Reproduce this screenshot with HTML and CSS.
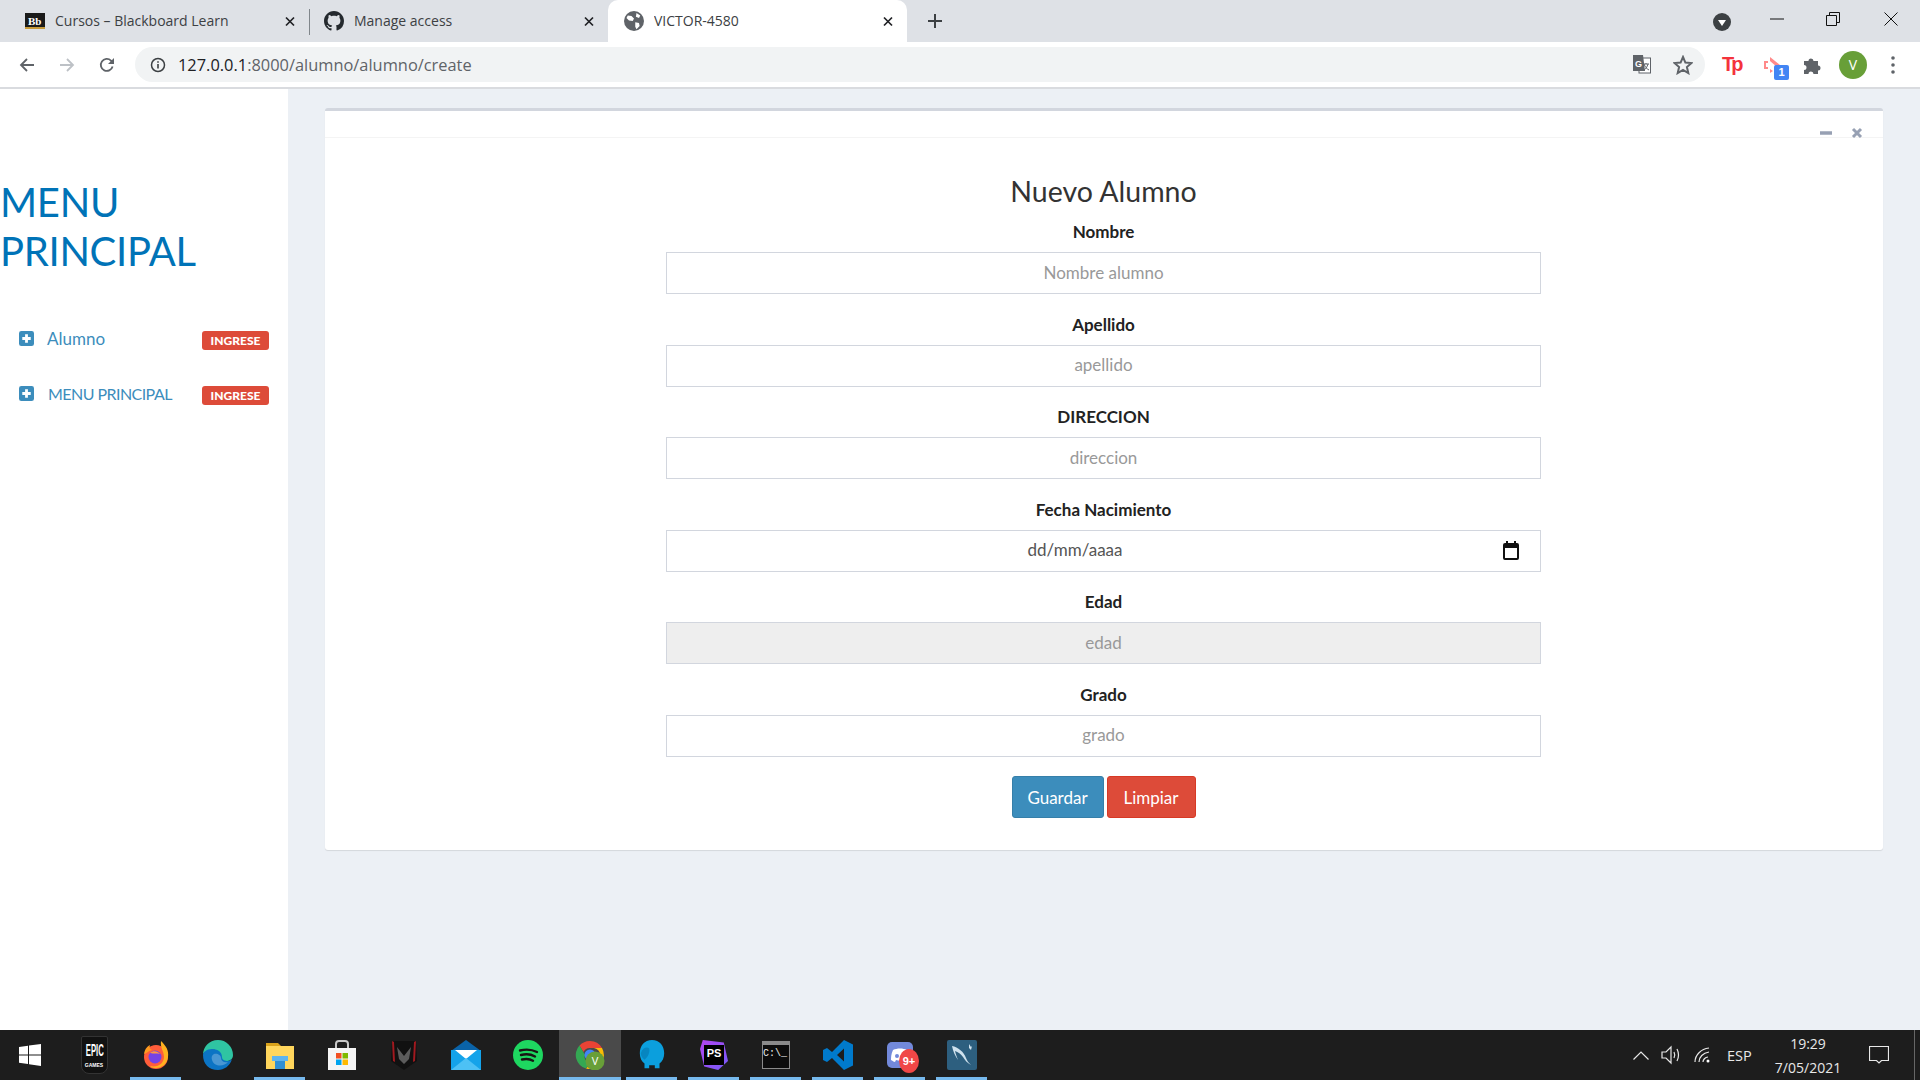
FILE: index.html
```html
<!DOCTYPE html>
<html lang="en">
<head>
  <meta charset="UTF-8">
  <title>VICTOR-4580</title>
  <link rel="stylesheet" href="styles.css">
</head>
<body>
  <div class="tabstrip">
    <div class="tab">
      <svg class="favicon" viewBox="0 0 20 16"><rect width="20" height="16" fill="#1a1a1a"/><rect x="0" y="14" width="20" height="2" fill="#c79a3a"/><text x="3" y="12" class="bb-mark">Bb</text></svg>
      <span class="tab-title">Cursos – Blackboard Learn</span>
      <svg class="tab-close" viewBox="0 0 10 10"><path d="M1 1l8 8M9 1l-8 8"/></svg>
    </div>
    <div class="tab tab-sep">
      <svg class="favicon" viewBox="0 0 16 16"><path fill="#24292e" d="M8 0C3.58 0 0 3.58 0 8c0 3.54 2.29 6.53 5.47 7.59.4.07.55-.17.55-.38 0-.19-.01-.82-.01-1.49-2.01.37-2.53-.49-2.69-.94-.09-.23-.48-.94-.82-1.13-.28-.15-.68-.52-.01-.53.63-.01 1.08.58 1.23.82.72 1.21 1.87.87 2.33.66.07-.52.28-.87.51-1.07-1.78-.2-3.64-.89-3.64-3.95 0-.87.31-1.59.82-2.15-.08-.2-.36-1.02.08-2.12 0 0 .67-.21 2.2.82.64-.18 1.32-.27 2-.27s1.36.09 2 .27c1.53-1.04 2.2-.82 2.2-.82.44 1.1.16 1.92.08 2.12.51.56.82 1.27.82 2.15 0 3.07-1.87 3.75-3.65 3.95.29.25.54.73.54 1.48 0 1.07-.01 1.93-.01 2.2 0 .21.15.46.55.38A8.01 8.01 0 0 0 16 8c0-4.42-3.58-8-8-8z"/></svg>
      <span class="tab-title">Manage access</span>
      <svg class="tab-close" viewBox="0 0 10 10"><path d="M1 1l8 8M9 1l-8 8"/></svg>
    </div>
    <div class="tab tab-active">
      <svg class="favicon" viewBox="0 0 16 16"><circle cx="8" cy="8" r="8" fill="#5f6368"/><path fill="#fff" d="M3 3.5l3 .5 2 2-1 2-3-.5-2-2zM9 9l3 .5.5 2.5-2.5 2.5-1-2zM10 1.5l3 2-1 2-2.5-1z"/></svg>
      <span class="tab-title">VICTOR-4580</span>
      <svg class="tab-close" viewBox="0 0 10 10"><path d="M1 1l8 8M9 1l-8 8"/></svg>
    </div>
    <svg class="new-tab" viewBox="0 0 14 14"><path d="M7 0v14M0 7h14"/></svg>
    <div class="window-controls">
      <svg class="tab-search" viewBox="0 0 18 18"><circle cx="9" cy="9" r="9" fill="#3c4043"/><path d="M5 7h8l-4 6z" fill="#fff"/></svg>
      <svg class="win-btn win-min" viewBox="0 0 14 14"><path d="M0 7h14"/></svg>
      <svg class="win-btn win-max" viewBox="0 0 14 14"><path d="M.5 3.5h10v10H.5zM3.5 3.5v-3h10v10h-3"/></svg>
      <svg class="win-btn win-x" viewBox="0 0 14 14"><path d="M.5.5l13 13M13.5.5l-13 13"/></svg>
    </div>
  </div>

  <div class="toolbar">
    <svg class="nav-icon" viewBox="0 0 16 16"><path stroke="#5f6368" d="M15 8H2M8 2L2 8l6 6"/></svg>
    <svg class="nav-icon" viewBox="0 0 16 16"><path stroke="#bdc1c6" d="M1 8h13M8 2l6 6-6 6"/></svg>
    <svg class="nav-icon" viewBox="0 0 16 16"><path stroke="#5f6368" d="M13.6 9.5A6 6 0 1 1 12 3.6L14 6"/><path fill="#5f6368" d="M15 1v6H9z"/></svg>
    <div class="omnibox">
      <svg class="info-icon" viewBox="0 0 16 16"><circle cx="8" cy="8" r="6.5" fill="none" stroke="#3c4043" stroke-width="1.5"/><path d="M7.2 7h1.6v4.6H7.2zM7.2 4.2h1.6v1.6H7.2z" fill="#3c4043"/></svg>
      <span class="url"><b>127.0.0.1</b>:8000/alumno/alumno/create</span>
      <svg class="omni-translate" viewBox="0 0 18 20"><rect x="6" y="3" width="11.5" height="15" fill="#fff" stroke="#5f6368"/><path d="M0 0h10l2 16H0z" fill="#5f6368"/><text x="2" y="12" class="translate-g">G</text><path d="M10 9h6M13 8v1M11 9c1 3 3 5 5 6M15 9c-1 3-2 5-4 6" stroke="#5f6368" fill="none"/></svg>
      <svg class="omni-star" viewBox="0 0 20 20"><path d="M10 2l2.4 5.6 6.1.5-4.6 4 1.4 6L10 15l-5.3 3.1 1.4-6-4.6-4 6.1-.5z" fill="none" stroke="#5f6368" stroke-width="2"/></svg>
    </div>
    <div class="extensions">
      <span class="ext-tp">Tp</span>
      <div class="ext-cast">
        <svg viewBox="0 0 20 20"><path d="M2 6h4v2H4v4h2v2H2zM8 2l10 8-3 2-7-6zM8 14l3 2-3 2z" fill="#ff8a8a"/></svg>
        <span class="ext-count">1</span>
      </div>
      <svg class="ext-puzzle" viewBox="0 0 20 20"><path fill="#5f6368" d="M2 6h4.5a2.5 2.5 0 0 1 5 0H16v4.5a2.5 2.5 0 0 1 0 5V19h-4.5a2.5 2.5 0 0 0-5 0H2v-4a2.5 2.5 0 0 0 0-5z"/></svg>
      <span class="avatar">V</span>
      <svg class="ext-menu" viewBox="0 0 4 18"><circle cx="2" cy="2" r="1.8"/><circle cx="2" cy="9" r="1.8"/><circle cx="2" cy="16" r="1.8"/></svg>
    </div>
  </div>

  <div class="page">
    <aside class="sidebar">
      <h1 class="side-title">MENU PRINCIPAL</h1>
      <ul class="side-menu">
        <li class="side-item">
          <svg class="plus-box" viewBox="0 0 16 16"><rect width="16" height="16" rx="2.5" fill="#3c8dbc"/><path d="M8 3.5v9M3.5 8h9" stroke="#fff" stroke-width="3"/></svg>
          <a class="side-link">Alumno</a>
          <span class="badge">INGRESE</span>
        </li>
        <li class="side-item">
          <svg class="plus-box" viewBox="0 0 16 16"><rect width="16" height="16" rx="2.5" fill="#3c8dbc"/><path d="M8 3.5v9M3.5 8h9" stroke="#fff" stroke-width="3"/></svg>
          <a class="side-link side-link-caps">MENU PRINCIPAL</a>
          <span class="badge">INGRESE</span>
        </li>
      </ul>
    </aside>

    <main class="content">
      <section class="card">
        <div class="card-header">
          <svg class="card-tool" viewBox="0 0 12 12"><path d="M0 6h12" stroke-width="3.5"/></svg>
          <svg class="card-tool" viewBox="0 0 12 12"><path d="M2 2l8 8M10 2l-8 8" stroke-width="3"/></svg>
        </div>
        <form class="card-body">
          <h2 class="form-title">Nuevo Alumno</h2>
          <div class="field">
            <label>Nombre</label>
            <input type="text" placeholder="Nombre alumno">
          </div>
          <div class="field">
            <label>Apellido</label>
            <input type="text" placeholder="apellido">
          </div>
          <div class="field">
            <label>DIRECCION</label>
            <input type="text" placeholder="direccion">
          </div>
          <div class="field">
            <label>Fecha Nacimiento</label>
            <div class="date-wrap">
              <input class="date-input" type="text" value="dd/mm/aaaa">
              <svg class="date-icon" viewBox="0 0 18 20"><path d="M1 5a2 2 0 0 1 2-2h1V1h2v2h6V1h2v2h1a2 2 0 0 1 2 2v13a2 2 0 0 1-2 2H3a2 2 0 0 1-2-2zm2 3v10h12V8z"/></svg>
            </div>
          </div>
          <div class="field">
            <label>Edad</label>
            <input type="text" placeholder="edad" disabled>
          </div>
          <div class="field">
            <label>Grado</label>
            <input type="text" placeholder="grado">
          </div>
          <div class="actions">
            <button type="button" class="btn btn-primary">Guardar</button>
            <button type="button" class="btn btn-danger">Limpiar</button>
          </div>
        </form>
      </section>
    </main>
  </div>

  <footer class="taskbar">
    <div class="task task-start">
      <svg viewBox="0 0 22 22" class="ti22"><path fill="#fff" d="M0 3l9-1.3V10.500H0zM10 1.500L22 0v10.500H10zM0 11.500h9V20L0 18.700zM10 11.500h12V22l-12-1.700z"/></svg>
    </div>
    <div class="task">
      <div class="epic"><span>EPIC</span><small>GAMES</small></div>
    </div>
    <div class="task task-open">
      <svg viewBox="0 0 30 30" class="ti30"><circle cx="15" cy="17" r="12" fill="#ff5d3a"/><path d="M20 1c5 5 8 9 7 16-1 7-6 11-12 11-2 0-4 0-6-2 8 2 14-3 14-9 0-6-4-9-3-16z" fill="#ffb11f"/><path d="M3 14C4 8 7 6 9 5c-1 3 0 4 2 5-4 1-6 4-8 4z" fill="#ff9a1f"/><circle cx="14" cy="17" r="6.500" fill="#7542e5"/><path d="M9 13c3-3 8-2 10 1-3-1-6 0-10-1z" fill="#ff9640"/></svg>
    </div>
    <div class="task">
      <svg viewBox="0 0 30 30" class="ti30"><path d="M15 0a15 15 0 0 1 15 15c0 4-3 6-7 6-4 0-6-2-5-5-1-4-5-7-10-6C3 11 0 13 0 15 0 7 6 0 15 0z" fill="#2fc4a2"/><path d="M0 15c0-3 4-6 9-6 7 0 10 4 10 8 0 3 3 4 6 4 1 0 3-1 4-2-2 7-8 11-14 11C6 30 0 24 0 15z" fill="#0c74c4"/><path d="M11 14c3-1 7 1 7 4 0 3 3 5 7 4-4 5-14 5-16-2-1-3 0-5 2-6z" fill="#fff" opacity=".25"/></svg>
    </div>
    <div class="task task-open">
      <svg viewBox="0 0 28 28" class="ti28"><path fill="#d9a21b" d="M0 2h12l3 3H0z"/><rect y="5" width="28" height="23" fill="#ffd65c"/><rect x="9" y="17" width="10" height="11" fill="#2f8fd4"/><rect x="6" y="15" width="16" height="5" fill="#5db4ee"/></svg>
    </div>
    <div class="task">
      <svg viewBox="0 0 28 30" class="ti30"><path d="M8 9V4a3 3 0 0 1 3-3h6a3 3 0 0 1 3 3v5" fill="none" stroke="#c8c8c8" stroke-width="2"/><rect y="8" width="28" height="22" fill="#f5f5f5"/><rect x="8" y="13" width="5.500" height="5.500" fill="#f25022"/><rect x="14.500" y="13" width="5.500" height="5.500" fill="#7fba00"/><rect x="8" y="19.500" width="5.500" height="5.500" fill="#00a4ef"/><rect x="14.500" y="19.500" width="5.500" height="5.500" fill="#ffb900"/></svg>
    </div>
    <div class="task">
      <svg viewBox="0 0 30 30" class="ti30"><path d="M3 1h24l1 20-13 9L2 21z" fill="#111"/><path d="M3 1l1 20 2 1L5 2zM27 1l-1 20-2 1 1-20z" fill="#a2191f"/><path d="M8 7l7 9 7-9-2 12-5 5-5-5z" fill="#5c5c5c"/></svg>
    </div>
    <div class="task">
      <svg viewBox="0 0 30 30" class="ti30"><path d="M15 0L30 11H0z" fill="#0a63a8"/><rect y="10" width="30" height="20" fill="#14a3ea"/><path d="M4 10h22l-11 9z" fill="#fff"/><path d="M0 30l15-12 15 12z" fill="#4dc1f5"/></svg>
    </div>
    <div class="task">
      <svg viewBox="0 0 30 30" class="ti30"><circle cx="15" cy="15" r="15" fill="#1ed760"/><path d="M7 10.500c6-1.500 12-1 17 1.500M8 15c5-1.200 10-.8 14 1.500M9 19.500c4-1 8-.6 11 1.200" fill="none" stroke="#191414" stroke-width="2.400" stroke-linecap="round"/></svg>
    </div>
    <div class="task task-active">
      <svg viewBox="0 0 30 30" class="ti30"><path d="M15 1a14 14 0 0 1 12 7H15a7 7 0 0 0-6.500 4L4.500 5.500A14 14 0 0 1 15 1z" fill="#ea4335"/><path d="M4.500 5.500L10 15a5 5 0 0 0 5 7l-4 6.500A14 14 0 0 1 4.500 5.500z" fill="#34a853"/><path d="M27 8a14 14 0 0 1-16 20.500L17 22a7 7 0 0 0 2-14z" fill="#fbbc05"/><circle cx="15" cy="15" r="5.500" fill="#4285f4"/><circle cx="20" cy="21" r="9.500" fill="#689f38"/><text x="20" y="25" class="task-v">V</text></svg>
    </div>
    <div class="task task-open">
      <svg viewBox="0 0 30 32" class="ti30"><path d="M15 0c8 0 13 6 13 14 0 5-2 9-5 11v5h-5v-3h-6v3H7v-5c-3-2-5-6-5-11C2 6 7 0 15 0z" fill="#0b9fdd"/><path d="M3 14C5 8 10 7 12 9c1 3-1 9-5 12-2-2-4-4-4-7z" fill="#0786c0"/></svg>
    </div>
    <div class="task task-open">
      <div class="ps-icon"><span>PS</span></div>
    </div>
    <div class="task task-open">
      <div class="term-icon"><span>C:\_</span></div>
    </div>
    <div class="task task-open">
      <svg viewBox="0 0 30 30" class="ti30"><path d="M21 0l9 4.500v21L21 30 9 18l-5 4-4-2V10l4-2 5 4zm0 8.500L14 15l7 6.500z" fill="#007acc"/></svg>
    </div>
    <div class="task task-open">
      <div class="discord">
        <svg viewBox="0 0 26 26"><rect width="26" height="26" rx="5" fill="#7289da"/><path d="M6 8c4-2 10-2 14 0 2 4 2 8 2 10-2 1-3 2-4 2l-1-2c-3 1-5 1-8 0l-1 2c-1 0-2-1-4-2 0-2 0-6 2-10z" fill="#fff"/><circle cx="10" cy="14" r="2" fill="#7289da"/><circle cx="16" cy="14" r="2" fill="#7289da"/></svg>
        <span class="discord-count">9+</span>
      </div>
    </div>
    <div class="task task-open">
      <svg viewBox="0 0 30 30" class="ti30"><rect y="0" width="30" height="30" rx="2" fill="#2d5f7f"/><path d="M5 6c6 1 12 6 14 12 1 3 3 5 5 7-4-2-6-5-8-8-2-3-5-5-8-6 1 4 2 6 3 9-3-4-5-9-6-14zM22 4l2 3 1-1-1 4-2-2z" fill="#cfe2ee"/></svg>
    </div>
    <div class="tray">
      <svg class="tray-chevron" viewBox="0 0 16 9"><path d="M.5 8.500L8 1l7.500 7.500"/></svg>
      <svg class="tray-sound" viewBox="0 0 20 20"><path d="M1 7h4l5-5v16l-5-5H1zM13 7c1 2 1 4 0 6M16 4c2 4 2 8 0 12" /></svg>
      <svg class="tray-wifi" viewBox="0 0 16 16"><path d="M1 15C1 8 7 2 15 1M5 15c0-5 4-9 10-10M9 15c0-2 2-5 5-5"/><circle cx="14" cy="14" r="1.500" fill="#fff" stroke="none"/></svg>
      <span class="tray-lang">ESP</span>
      <div class="clock"><span>19:29</span><span>7/05/2021</span></div>
      <svg class="tray-note" viewBox="0 0 20 20"><path d="M.5 1.500h19v14h-7L10 18l-2.500-2.500h-7z"/></svg>
      <span class="tray-edge"></span>
    </div>
  </footer>
</body>
</html>
```

FILE: styles.css
```css
* {
  box-sizing: border-box;
}
html, body {
  margin: 0;
  height: 100%;
}
body {
  display: flex;
  flex-direction: column;
  height: 1080px;
  overflow: hidden;
  font-family: "Lato", "Liberation Sans", sans-serif;
  background: #ecf0f5;
}

/* browser chrome */
.tabstrip {
  display: flex;
  align-items: center;
  height: 42px;
  background: #dee1e6;
  font-family: "Open Sans", sans-serif;
  font-size: 14px;
  color: #3c4043;
}
.tab {
  display: flex;
  align-items: center;
  width: 299px;
  height: 42px;
  padding: 0 14px 0 25px;
  border-left: 1px solid transparent;
}
.tab:first-child {
  width: 309px;
  border-left: 0;
}
.tab-sep {
  position: relative;
  padding-left: 14px;
}
.tab-sep::before {
  content: "";
  position: absolute;
  left: -1px;
  top: 9px;
  bottom: 7px;
  width: 1px;
  background: #80868b;
}
.tab-active {
  background: #fff;
  border-radius: 10px 10px 0 0;
  padding-left: 15px;
  color: #3c4043;
}
.favicon {
  width: 20px;
  height: 20px;
  flex: none;
  margin-right: 10px;
}
.bb-mark {
  font: bold 11px "Liberation Serif", serif;
  fill: #fff;
}
.tab-title {
  flex: 1;
  margin-top: -1px;
  white-space: nowrap;
  overflow: hidden;
}
.tab-close {
  width: 10px;
  height: 11px;
  flex: none;
  fill: none;
  stroke: #202124;
  stroke-width: 1.7;
}
.new-tab {
  width: 14px;
  height: 14px;
  margin-left: 21px;
  fill: none;
  stroke: #3c4043;
  stroke-width: 2;
}
.window-controls {
  display: flex;
  align-items: center;
  margin-left: auto;
}
.tab-search {
  width: 18px;
  height: 18px;
  margin: 2px 39px 0 0;
}
.win-btn {
  width: 14px;
  height: 14px;
  fill: none;
  stroke: #111;
  stroke-width: 1;
  margin-bottom: 5px;
}
.win-min {
  margin-right: 42px;
}
.win-max {
  margin-right: 44px;
}
.win-x {
  margin-right: 22px;
}

.toolbar {
  display: flex;
  align-items: center;
  height: 47px;
  padding: 0 14px 0 19px;
  background: #fff;
  border-bottom: 2px solid #d9dbdf;
}
.nav-icon {
  width: 16px;
  height: 16px;
  flex: none;
  margin-right: 24px;
  fill: none;
  stroke-width: 1.8;
}
.nav-icon:nth-of-type(3) {
  margin-right: 20px;
}
.omnibox {
  display: flex;
  align-items: center;
  width: 1570px;
  height: 35px;
  padding: 0 12px 0 15px;
  background: #f1f3f4;
  border-radius: 18px;
  font-family: "Open Sans", sans-serif;
  font-size: 16.4px;
  color: #5f6368;
}
.info-icon {
  width: 16px;
  height: 16px;
  margin-right: 12px;
}
.url {
  flex: 1;
}
.url b {
  font-weight: 400;
  color: #202124;
}
.omni-translate {
  width: 18px;
  height: 20px;
  margin-right: 22px;
}
.translate-g {
  font: bold 9px "Liberation Sans", sans-serif;
  fill: #fff;
}
.omni-star {
  width: 20px;
  height: 20px;
}
.extensions {
  display: flex;
  align-items: center;
  margin-left: 17px;
}
.ext-tp {
  width: 24px;
  font: bold 20px "Liberation Sans", sans-serif;
  letter-spacing: -3px;
  color: #f4333c;
}
.ext-cast {
  position: relative;
  width: 20px;
  height: 20px;
  margin-left: 16px;
}
.ext-cast svg {
  width: 20px;
  height: 20px;
}
.ext-count {
  position: absolute;
  left: 12px;
  top: 10px;
  width: 15px;
  height: 15px;
  background: #4285f4;
  border-radius: 2px;
  color: #fff;
  font: bold 11px/15px "Liberation Sans", sans-serif;
  text-align: center;
}
.ext-puzzle {
  width: 20px;
  height: 20px;
  margin-left: 20px;
}
.avatar {
  width: 28px;
  height: 28px;
  margin-left: 17px;
  border-radius: 50%;
  background: #689f38;
  color: #fff;
  font: 14px/28px "Open Sans", sans-serif;
  text-align: center;
}
.ext-menu {
  width: 4px;
  height: 18px;
  margin-left: 24px;
  fill: #5f6368;
}

/* page */
.page {
  display: flex;
  flex: 1;
  min-height: 0;
}
.sidebar {
  width: 288px;
  flex: none;
  padding-top: 89px;
  background: #fff;
}
.side-title {
  margin: 0 0 55px 0;
  width: 240px;
  font-size: 40px;
  font-weight: 400;
  letter-spacing: -0.3px;
  line-height: 49px;
  color: #0073b7;
}
.side-menu {
  list-style: none;
  margin: 0;
  padding: 0 19px;
  display: flex;
  flex-direction: column;
  gap: 36px;
}
.side-item {
  display: flex;
  align-items: flex-start;
  height: 19px;
}
.plus-box {
  width: 15px;
  height: 15px;
  flex: none;
  margin-right: 13px;
}
.side-link {
  flex: 1;
  margin-top: -4px;
  font-size: 17px;
  line-height: 24px;
  color: #3c8dbc;
  white-space: nowrap;
}
.side-link-caps {
  margin-left: 1px;
  font-size: 16px;
  letter-spacing: -0.55px;
}
.badge {
  width: 67px;
  height: 19px;
  background: #dd4b39;
  border-radius: 3px;
  color: #fff;
  font-size: 12px;
  font-weight: 900;
  line-height: 19px;
  text-align: center;
}
.content {
  flex: 1;
  padding: 19px 37px 0 37px;
}
.card {
  height: 742px;
  background: #fff;
  border-top: 3px solid #d2d6de;
  border-radius: 3px;
  box-shadow: 0 1px 1px rgba(0, 0, 0, 0.1);
}
.card-header {
  display: flex;
  justify-content: flex-end;
  align-items: center;
  gap: 19px;
  height: 27px;
  padding: 17px 20px 0 0;
  border-bottom: 1px solid #f4f4f4;
}
.card-tool {
  width: 12px;
  height: 12px;
  fill: none;
  stroke: #97a0b3;
}
.card-body {
  width: 875px;
  margin-left: 341px;
}
.form-title {
  margin: 0;
  padding-top: 36px;
  height: 85px;
  font-size: 28.5px;
  font-weight: 400;
  line-height: 34px;
  text-align: center;
  color: #333;
}
.field {
  height: 92.5px;
  text-align: center;
  margin-top: -1px;
  margin-bottom: 1px;
}
.field label {
  display: block;
  height: 30px;
  font-size: 17px;
  font-weight: 700;
  line-height: 20px;
  color: #222;
}
.field input {
  display: block;
  width: 100%;
  height: 42px;
  padding: 6px 12px 8px;
  border: 1px solid #d2d6de;
  background: #fff;
  font: 17px "Lato", sans-serif;
  color: #555;
  text-align: center;
}
.field input::placeholder {
  color: #999;
  opacity: 1;
}
.field input:disabled {
  background: #eee;
}
.date-wrap {
  position: relative;
}
.field .date-input {
  padding-right: 69px;
  color: #555;
}
.date-icon {
  position: absolute;
  right: 21px;
  top: 10px;
  width: 18px;
  height: 20px;
  fill: #111;
}
.actions {
  display: flex;
  justify-content: center;
  gap: 3px;
  margin-top: -2px;
}
.btn {
  height: 42px;
  padding: 0;
  border: 1px solid;
  border-radius: 3px;
  font: 17px "Lato", sans-serif;
  color: #fff;
}
.btn-primary {
  width: 92px;
  background: #3c8dbc;
  border-color: #367fa9;
}
.btn-danger {
  width: 89px;
  background: #dd4b39;
  border-color: #d73925;
}

/* windows taskbar */
.taskbar {
  display: flex;
  align-items: stretch;
  height: 50px;
  flex: none;
  background: #1d1d1d;
}
.task {
  position: relative;
  display: flex;
  align-items: center;
  justify-content: center;
  width: 62px;
  flex: none;
}
.task-start {
  width: 63px;
  padding-right: 4px;
}
.task-open::after {
  content: "";
  position: absolute;
  left: 5px;
  right: 6px;
  bottom: 0;
  height: 3px;
  background: #76b9ed;
}
.task-active {
  background: #4a4a4a;
}
.task-active::after {
  content: "";
  position: absolute;
  left: 0;
  right: 0;
  bottom: 0;
  height: 3px;
  background: #76b9ed;
}
.ti22 {
  width: 22px;
  height: 22px;
}
.ti28 {
  width: 28px;
  height: 28px;
}
.ti30 {
  width: 30px;
  height: 30px;
}
.task-v {
  font: 11px "Open Sans", sans-serif;
  fill: #fff;
  text-anchor: middle;
}
.epic {
  width: 27px;
  height: 38px;
  padding-top: 4px;
  background: #111;
  border: 1px solid #333;
  border-radius: 2px 2px 8px 8px;
  color: #fff;
  text-align: center;
  line-height: 1;
}
.epic span {
  display: block;
  font: bold 11px "Liberation Sans", sans-serif;
  transform: scale(0.7, 1.5);
  transform-origin: 50% 0;
}
.epic small {
  display: block;
  margin-top: 9px;
  font: bold 5px "Liberation Sans", sans-serif;
}
.ps-icon {
  display: flex;
  align-items: center;
  justify-content: center;
  width: 28px;
  height: 30px;
  background: linear-gradient(135deg, #b345f1, #765af8);
  clip-path: polygon(10% 0, 85% 8%, 100% 70%, 65% 100%, 15% 88%, 0 30%);
}
.ps-icon span {
  display: block;
  width: 20px;
  height: 20px;
  background: #000;
  color: #fff;
  font: bold 11px/16px "Liberation Sans", sans-serif;
  text-align: center;
}
.term-icon {
  width: 28px;
  height: 28px;
  padding-top: 3px;
  background: #0c0c0c;
  border: 1px solid #8a8a8a;
  border-top-width: 4px;
  color: #eee;
  font: 10px "Liberation Mono", monospace;
}
.discord {
  position: relative;
  width: 26px;
  height: 26px;
}
.discord svg {
  width: 26px;
  height: 26px;
  display: block;
}
.discord-count {
  position: absolute;
  left: 12px;
  top: 7px;
  width: 20px;
  height: 24px;
  background: #f04747;
  border-radius: 50%;
  color: #fff;
  font: bold 11px/24px "Liberation Sans", sans-serif;
  text-align: center;
}
.tray {
  display: flex;
  align-items: center;
  margin-left: auto;
  color: #e8e8e8;
  font-family: "Open Sans", sans-serif;
  font-size: 14px;
}
.tray svg {
  fill: none;
  stroke: #e8e8e8;
  stroke-width: 1.2;
  flex: none;
}
.tray-chevron {
  width: 16px;
  height: 9px;
  margin-right: 12px;
}
.tray-sound {
  width: 20px;
  height: 20px;
  margin-right: 13px;
}
.tray-wifi {
  width: 16px;
  height: 16px;
  margin-right: 17px;
}
.tray-lang {
  width: 25px;
  font-size: 14.5px;
}
.clock {
  display: flex;
  flex-direction: column;
  align-items: center;
  gap: 5px;
  width: 70px;
  margin: 0 26px 0 21px;
  font-size: 14px;
  line-height: 19px;
}
.tray-note {
  width: 20px;
  height: 20px;
  margin-right: 25px;
}
.tray-edge {
  width: 1px;
  align-self: stretch;
  margin-right: 5px;
  background: #666;
}
```
